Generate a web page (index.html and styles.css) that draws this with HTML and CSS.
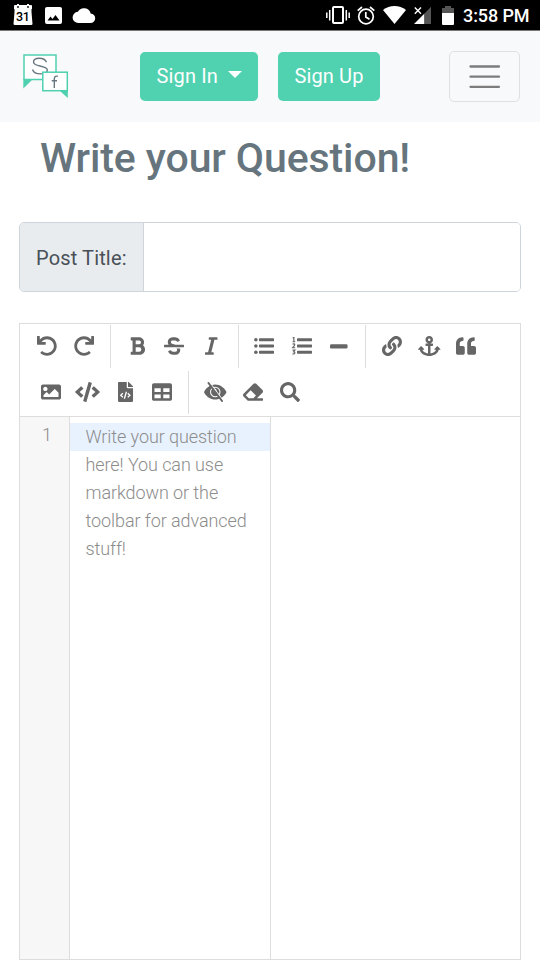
FILE: index.html
```html
<!DOCTYPE html>
<html lang="en">
<head>
<meta charset="utf-8">
<title>Write your Question!</title>
<link rel="stylesheet" href="styles.css">
</head>
<body>
<div class="status">
  <div class="notices">
    <svg width="20" height="22" viewBox="0 0 20 22"><path fill="#fff" d="M1 2Q1 1 2 1H4V0H6V1H14V0H16V1H18Q19 1 19 2V5H18.500V8L19.500 20Q19.500 21 18 21H2Q.5 21 .5 20L1.500 8V5H1Z"/><circle cx="5" cy="3" r=".9"/><circle cx="15" cy="3" r=".9"/><text x="9.700" y="17" text-anchor="middle" class="day">31</text></svg>
    <svg class="photo" width="17" height="17" viewBox="0 0 17 17"><rect width="17" height="17" rx="2" fill="#fff"/><path d="M2.500 13.500 5.500 9.500 7.500 12 10.500 8 14.500 13.500Z"/></svg>
    <svg class="cloud" width="22" height="15" viewBox="0 0 22 15"><path fill="#fff" d="M17.700 5.600A6.900 6.900 0 0 0 4.900 3.800 5.500 5.500 0 0 0 5.500 15H17.300A4.700 4.700 0 0 0 17.700 5.600Z"/></svg>
  </div>
  <div class="system">
    <svg width="24" height="18" viewBox="0 0 24 18"><g fill="none" stroke="#fff"><rect x="7" y="1" width="10" height="16" rx="1" stroke-width="2"/><path stroke-width="1.500" d="M.8 6.500V12M3.700 4V14.500M20.300 4V14.500M23.200 6.500V12"/></g></svg>
    <svg class="alarm" width="18" height="19" viewBox="0 0 18 19"><g fill="none" stroke="#fff" stroke-width="1.700"><circle cx="9" cy="10.500" r="7.300"/><path d="M.7 4.600 5 1M17.300 4.600 13 1M8.800 6V11L12.500 13.200"/></g></svg>
    <svg class="wifi" width="23" height="18" viewBox="0 0 23 18"><path fill="#fff" d="M0 4A19 19 0 0 1 23 4L11.500 18Z"/></svg>
    <svg class="cell" width="17" height="18" viewBox="0 0 17 18"><path fill="#fff" d="M0 18 10.500 7.500V18Z"/><path fill="#555" d="M10.500 7.500 17 .8V18H10.500Z"/><path stroke="#fff" stroke-width="1.400" d="M.8 1.500 7 7.700M7 1.500 .8 7.700"/></svg>
    <svg class="battery" width="12" height="19" viewBox="0 0 12 19"><path fill="#555" d="M0 2H3V0H9V2H12V7H0Z"/><path fill="#fff" d="M0 7H12V18Q12 19 11 19H1Q0 19 0 18Z"/></svg>
    <span class="clock">3:58 PM</span>
  </div>
</div>

<nav class="navbar">
  <svg class="logo" width="46" height="46" viewBox="0 0 46 46"><g fill="#fff" stroke="#4fd1b0" stroke-width="1.500"><path fill="#4fd1b0" stroke="none" d="M.3 25H10L.3 34.500Z"/><rect x="1" y="1" width="32" height="24.500"/></g><path fill="none" stroke="#697780" stroke-width="1.400" d="M23.500 8.200C22 4.500 18.500 4.200 16.300 4.200 12.500 4.200 10.500 6 10.500 8 10.500 10.500 13.500 11.300 17 12 22 13 24.300 14 24.300 16 24.300 18.500 21.500 19.900 17.500 19.900 13.500 19.900 10.500 18.700 9.500 15.500"/><g fill="#fff" stroke="#4fd1b0" stroke-width="1.500"><path fill="#4fd1b0" stroke="none" d="M37 37H44.800V44Z"/><rect x="19.800" y="18.200" width="24.500" height="18.500"/></g><path fill="none" stroke="#697780" stroke-width="1.400" d="M34.800 22.300C32 21.700 31.300 23 31.300 25.300V34M28.700 26.700H34"/></svg>
  <button class="btn signin">Sign In <i class="caret"></i></button>
  <button class="btn signup">Sign Up</button>
  <button class="toggler" aria-label="Menu"><svg width="32" height="26" viewBox="0 0 32 26"><path stroke="#7c7c7d" stroke-width="2.300" stroke-linecap="round" d="M1.500 2.500H30M1.500 12.700H30M1.500 22.800H30"/></svg></button>
</nav>

<main>
  <h1>Write your Question!</h1>
  <label class="post"><span class="post-label">Post Title:</span><input type="text"></label>

  <section class="editor">
    <div class="toolbar">
      <div class="row">
        <div class="group">
          <b><svg viewBox="0 0 512 512" width="20"><path id="undo" d="M212.333 224.333H12c-6.627 0-12-5.373-12-12V12C0 5.373 5.373 0 12 0h48c6.627 0 12 5.373 12 12v78.112C117.773 39.279 184.260 7.470 258.175 8.007c136.906.994 246.448 111.623 246.157 248.532C504.041 393.258 393.120 504 256.333 504c-64.089 0-122.496-24.313-166.510-64.215-5.099-4.622-5.334-12.554-.467-17.420l33.967-33.967c4.474-4.474 11.662-4.717 16.401-.525C170.760 415.336 211.580 432 256.333 432c97.268 0 176-78.716 176-176 0-97.267-78.716-176-176-176-58.496 0-110.280 28.476-142.274 72.333h98.274c6.627 0 12 5.373 12 12v48c0 6.627-5.373 12-12 12z"/></svg></b>
          <b><svg viewBox="0 0 512 512" width="20"><use href="#undo" transform="matrix(-1 0 0 1 512 0)"/></svg></b>
        </div>
        <div class="group">
          <b><svg viewBox="0 0 384 512" width="15"><path d="M333.490 238a122 122 0 0 0 27-65.210C367.870 96.490 308 32 233.420 32H34a16 16 0 0 0-16 16v48a16 16 0 0 0 16 16h31.870v288H34a16 16 0 0 0-16 16v48a16 16 0 0 0 16 16h209.320c70.800 0 134.140-51.750 141-122.400 4.740-48.450-16.390-92.060-50.830-119.600zM145.660 112h87.760a48 48 0 0 1 0 96h-87.760zm87.760 288h-87.760V288h87.760a56 56 0 0 1 0 112z"/></svg></b>
          <b><svg viewBox="0 0 512 512" width="20"><path d="M496 224H293.900l-87.170-26.830A43.550 43.550 0 0 1 219.550 112h66.790A49.890 49.890 0 0 1 331 139.580a16 16 0 0 0 21.460 7.150l42.940-21.470a16 16 0 0 0 7.160-21.460l-.53-1A128 128 0 0 0 287.510 32h-68a123.680 123.680 0 0 0-123 135.640c2 20.890 10.100 39.830 21.780 56.360H16a16 16 0 0 0-16 16v32a16 16 0 0 0 16 16h480a16 16 0 0 0 16-16v-32a16 16 0 0 0-16-16zm-180.240 96A43 43 0 0 1 336 356.450 43.590 43.590 0 0 1 292.450 400h-66.790A49.890 49.890 0 0 1 181 372.420a16 16 0 0 0-21.460-7.150l-42.940 21.470a16 16 0 0 0-7.160 21.460l.53 1A128 128 0 0 0 224.490 480h68a123.680 123.680 0 0 0 123-135.640 114.250 114.250 0 0 0-5.340-24.360z"/></svg></b>
          <b><svg viewBox="0 0 320 512" width="12.500"><path d="M320 48v32a16 16 0 0 1-16 16h-62.760l-80 320H208a16 16 0 0 1 16 16v32a16 16 0 0 1-16 16H16a16 16 0 0 1-16-16v-32a16 16 0 0 1 16-16h62.760l80-320H112a16 16 0 0 1-16-16V48a16 16 0 0 1 16-16h192a16 16 0 0 1 16 16z"/></svg></b>
        </div>
        <div class="group">
          <b><svg viewBox="0 0 512 512" width="20"><circle cx="48" cy="96" r="46"/><circle cx="48" cy="256" r="46"/><circle cx="48" cy="416" r="46"/><path id="bars" d="M144 60H496Q512 60 512 76V116Q512 132 496 132H144Q128 132 128 116V76Q128 60 144 60ZM144 220H496Q512 220 512 236V276Q512 292 496 292H144Q128 292 128 276V236Q128 220 144 220ZM144 380H496Q512 380 512 396V436Q512 452 496 452H144Q128 452 128 436V396Q128 380 144 380Z"/></svg></b>
          <b><svg viewBox="0 0 512 512" width="20"><use href="#bars"/><path class="line" d="M18 42H48V145M14 147H82M14 207Q70 190 70 222 65 250 18 300H82M14 362H74L44 405Q76 408 72 436 62 470 12 456"/></svg></b>
          <b><svg viewBox="0 0 448 512" width="17.500"><rect y="208" width="448" height="112" rx="32"/></svg></b>
        </div>
        <div class="group">
          <b><svg viewBox="0 0 512 512" width="20"><path d="M326.612 185.391c59.747 59.809 58.927 155.698.36 214.590-.11.120-.24.250-.36.370l-67.200 67.200c-59.270 59.270-155.699 59.262-214.960 0-59.270-59.260-59.270-155.700 0-214.960l37.106-37.106c9.840-9.840 26.786-3.300 27.294 10.606.648 17.722 3.826 35.527 9.690 52.721 1.986 5.822.567 12.262-3.783 16.612l-13.087 13.087c-28.026 28.026-28.905 73.660-1.155 101.960 28.024 28.579 74.086 28.749 102.325.510l67.200-67.190c28.191-28.191 28.073-73.757 0-101.830-3.701-3.694-7.429-6.564-10.341-8.569a16.037 16.037 0 0 1-6.947-12.606c-.396-10.567 3.348-21.456 11.698-29.806l21.054-21.055c5.521-5.521 14.182-6.199 20.584-1.731a152.482 152.482 0 0 1 20.522 17.197zM467.547 44.449c-59.261-59.262-155.690-59.270-214.960 0l-67.200 67.200c-.12.120-.25.250-.36.370-58.566 58.892-59.387 154.781.360 214.590a152.454 152.454 0 0 0 20.521 17.196c6.402 4.468 15.064 3.789 20.584-1.731l21.054-21.055c8.350-8.350 12.094-19.239 11.698-29.806a16.037 16.037 0 0 0-6.947-12.606c-2.912-2.005-6.640-4.875-10.341-8.569-28.073-28.073-28.191-73.639 0-101.830l67.200-67.190c28.239-28.239 74.300-28.069 102.325.510 27.750 28.300 26.872 73.934-1.155 101.960l-13.087 13.087c-4.350 4.350-5.769 10.790-3.783 16.612 5.864 17.194 9.042 34.999 9.690 52.721.509 13.906 17.454 20.446 27.294 10.606l37.106-37.106c59.271-59.259 59.271-155.699.001-214.959z"/></svg></b>
          <b><svg viewBox="0 0 576 512" width="22.500"><path d="M12.971 352h32.394C67.172 454.735 181.944 512 288 512c106.229 0 220.853-57.380 242.635-160h32.394c10.691 0 16.045-12.926 8.485-20.485l-67.029-67.029c-4.686-4.686-12.284-4.686-16.971 0l-67.029 67.029c-7.560 7.560-2.206 20.485 8.485 20.485h35.146c-20.290 54.317-84.963 86.588-144.117 94.015V256h52c6.627 0 12-5.373 12-12v-40c0-6.627-5.373-12-12-12h-52v-5.470c37.281-13.226 63.993-48.693 64-90.370C384.009 43.210 341.380.199 288.427.001 235.318-.195 192 42.815 192 96c0 41.798 26.716 77.409 64 90.530V192h-52c-6.627 0-12 5.373-12 12v40c0 6.627 5.373 12 12 12h52v190.015c-58.936-7.399-123.820-39.679-144.117-94.015h35.146c10.691 0 16.045-12.926 8.485-20.485l-67.029-67.029c-4.686-4.686-12.284-4.686-16.971 0L4.485 331.515C-3.074 339.074 2.280 352 12.971 352zM288 64c17.645 0 32 14.355 32 32s-14.355 32-32 32-32-14.355-32-32 14.355-32 32-32z"/></svg></b>
          <b><svg viewBox="0 0 512 512" width="20"><path d="M464 256h-80v-64c0-35.300 28.700-64 64-64h8c13.300 0 24-10.700 24-24V56c0-13.300-10.700-24-24-24h-8c-88.400 0-160 71.600-160 160v240c0 26.500 21.500 48 48 48h128c26.500 0 48-21.500 48-48V304c0-26.500-21.500-48-48-48zm-288 0H96v-64c0-35.300 28.700-64 64-64h8c13.300 0 24-10.700 24-24V56c0-13.300-10.700-24-24-24h-8C71.600 32 0 103.600 0 192v240c0 26.500 21.500 48 48 48h128c26.500 0 48-21.500 48-48V304c0-26.500-21.500-48-48-48z"/></svg></b>
        </div>
      </div>
      <div class="row second">
        <div class="group">
          <b><svg viewBox="0 0 512 512" width="20"><path d="M464 448H48c-26.510 0-48-21.490-48-48V112c0-26.510 21.490-48 48-48h416c26.510 0 48 21.490 48 48v288c0 26.510-21.490 48-48 48zM112 120c-30.928 0-56 25.072-56 56s25.072 56 56 56 56-25.072 56-56-25.072-56-56-56zM64 384h384V272l-87.515-87.515c-4.686-4.686-12.284-4.686-16.971 0L208 320l-55.515-55.515c-4.686-4.686-12.284-4.686-16.971 0L64 336v48z"/></svg></b>
          <b><svg viewBox="0 0 640 512" width="25"><path d="M278.900 511.500l-61-17.700c-6.400-1.800-10-8.500-8.200-14.900L346.200 8.700c1.800-6.400 8.500-10 14.900-8.200l61 17.700c6.400 1.800 10 8.500 8.200 14.900L293.800 503.300c-1.900 6.400-8.500 10.100-14.900 8.200zm-114-112.200l43.500-46.400c4.600-4.900 4.300-12.700-.8-17.200L117 256l90.600-79.700c5.100-4.500 5.500-12.300.8-17.200l-43.500-46.400c-4.500-4.800-12.100-5.100-17-.5L3.800 247.200c-5.100 4.700-5.100 12.800 0 17.500l144.100 135.100c4.900 4.600 12.500 4.400 17-.5zm327.200.6l144.100-135.100c5.100-4.700 5.100-12.800 0-17.500L492.100 112.100c-4.800-4.500-12.400-4.300-17 .5L431.600 159c-4.600 4.900-4.300 12.700.8 17.200L523 256l-90.600 79.700c-5.100 4.500-5.500 12.300-.8 17.200l43.500 46.400c4.500 4.900 12.100 5.100 17 .6z"/></svg></b>
          <b><svg viewBox="0 0 384 512" width="15"><path d="M384 121.941V128H256V0h6.059c6.365 0 12.470 2.529 16.971 7.029l97.941 97.941A24.005 24.005 0 0 1 384 121.941zM248 160c-13.200 0-24-10.800-24-24V0H24C10.745 0 0 10.745 0 24v464c0 13.255 10.745 24 24 24h336c13.255 0 24-10.745 24-24V160H248z"/><path class="cut" d="M124 288 70 338 124 388M250 288 304 338 250 388M216 248 162 430"/></svg></b>
          <b><svg viewBox="0 0 512 512" width="20"><path d="M464 32H48C21.490 32 0 53.490 0 80v352c0 26.510 21.490 48 48 48h416c26.510 0 48-21.490 48-48V80c0-26.510-21.490-48-48-48zM224 416H64v-96h160v96zm0-160H64v-96h160v96zm224 160H288v-96h160v96zm0-160H288v-96h160v96z"/></svg></b>
        </div>
        <div class="group">
          <b><svg viewBox="0 0 576 512" width="22.500"><path fill-rule="evenodd" d="M6 240C66 136 170 64 288 64S510 136 570 240Q576 256 570 272C510 376 406 448 288 448S66 376 6 272Q0 256 6 240ZM288 122A134 134 0 1 0 288 390 134 134 0 1 0 288 122Z"/><path fill-rule="evenodd" d="M288 148A108 108 0 1 1 288 364 108 108 0 1 1 288 148ZM280 172A40 40 0 1 0 280 252 40 40 0 1 0 280 172Z"/><path class="gap" d="M140 0 500 490"/><path class="slash" d="M112 22 464 490"/></svg></b>
          <b><svg viewBox="0 0 512 512" width="20"><path d="M497.941 273.941c18.745-18.745 18.745-49.137 0-67.882l-160-160c-18.745-18.745-49.136-18.746-67.883 0l-256 256c-18.745 18.745-18.745 49.137 0 67.882l96 96A48.004 48.004 0 0 0 144 480h356c6.627 0 12-5.373 12-12v-40c0-6.627-5.373-12-12-12H355.883l142.058-142.059zm-302.627-62.627l137.373 137.373L265.373 416H150.628l-80-80 124.686-124.686z"/></svg></b>
          <b><svg viewBox="0 0 512 512" width="20"><path d="M505 442.700L405.300 343c-4.500-4.500-10.600-7-17-7H372c27.600-35.300 44-79.700 44-128C416 93.100 322.900 0 208 0S0 93.100 0 208s93.100 208 208 208c48.300 0 92.700-16.400 128-44v16.300c0 6.400 2.500 12.500 7 17l99.700 99.700c9.400 9.400 24.600 9.400 33.900 0l28.300-28.300c9.400-9.400 9.400-24.600.1-34zM208 336c-70.700 0-128-57.200-128-128 0-70.700 57.200-128 128-128 70.700 0 128 57.200 128 128 0 70.700-57.200 128-128 128z"/></svg></b>
        </div>
      </div>
    </div>
    <div class="panes">
      <div class="gutter">1</div>
      <div class="code"><div class="first">Write your question</div><div>here! You can use</div><div>markdown or the</div><div>toolbar for advanced</div><div>stuff!</div></div>
      <div class="preview"></div>
    </div>
  </section>
</main>
</body>
</html>
```
FILE: styles.css
```css
* { box-sizing: border-box; }
html, body { margin: 0; height: 100%; }
body { height: 960px; overflow: hidden; background: #fff; font-family: Roboto, sans-serif; display: flex; flex-direction: column; }
svg { display: block; flex: none; overflow: visible; }

.status { height: 31px; flex: none; background: #000; border-bottom: 1px solid #777; display: flex; justify-content: space-between; padding: 0 10px 0 12.500px; }
.notices, .system { display: flex; align-items: center; }
.day { font: 500 12.500px Roboto, sans-serif; letter-spacing: -.5px; }
.photo { margin-left: 12.500px; }
.cloud { margin-left: 11px; }
.system { color: #fff; }
.alarm { margin-left: 7.500px; }
.wifi { margin-left: 8px; }
.cell { margin-left: 8px; }
.battery { margin-left: 11px; }
.clock { margin-left: 9px; width: 67px; font-size: 18px; font-weight: 500; letter-spacing: -.1px; line-height: 30px; padding-top: 2px; white-space: nowrap; }

.navbar { height: 91px; flex: none; background: #f8f9fb; display: flex; align-items: center; padding: 0 20px 0 23px; }
.btn { border: 0; border-radius: 5px; height: 49px; background: #50d1b0; color: #fff; font: 400 20px/49px Roboto, sans-serif; padding: 0; letter-spacing: .15px; white-space: nowrap; }
.signin { width: 118px; margin-left: 71px; display: flex; align-items: center; justify-content: center; gap: 9.500px; }
.caret { border: 7px solid transparent; border-top-color: #fff; border-bottom: 0; margin-top: -4px; }
.signup { width: 102px; margin-left: 20px; }
.toggler { margin-left: auto; width: 71px; height: 51px; border: 1px solid #dfe0e2; border-radius: 5px; background: none; padding: 0; display: flex; align-items: center; justify-content: center; }

main { flex: 1; display: flex; flex-direction: column; padding: 0 19px; }
h1 { margin: 11px 0 0 21px; font-size: 41px; font-weight: 500; letter-spacing: -.1px; line-height: 50px; color: #66757d; white-space: nowrap; }
.post { margin-top: 39px; height: 70px; flex: none; display: flex; border: 1px solid #ced4da; border-radius: 5px; overflow: hidden; }
.post-label { width: 124px; background: #e8ecef; border-right: 1px solid #ced4da; color: #495057; font-size: 20px; line-height: 70px; letter-spacing: .15px; padding-left: 16px; white-space: nowrap; }
.post input { flex: 1; min-width: 0; border: 0; background: #fff; font: 20px Roboto, sans-serif; }

.editor { flex: 1; margin-top: 31px; border: 1px solid #ddd; display: flex; flex-direction: column; }
.toolbar { height: 93px; flex: none; border-bottom: 1px solid #ddd; padding-top: 1px; }
.row { display: flex; height: 46px; padding-left: 8.400px; }
.second { padding-left: 12.200px; }
.group { display: flex; height: 43px; }
.group + .group { margin-left: 7.400px; border-left: 1px solid #ddd; padding-left: 7.400px; }
.group b { width: 37.200px; height: 42px; display: flex; align-items: center; justify-content: center; }
.group svg { height: 20px; fill: #666; }
.group .line { fill: none; stroke: #666; stroke-width: 30; }
.group .cut { fill: none; stroke: #fff; stroke-width: 34; }
.group .gap { stroke: #fff; stroke-width: 26; }
.group .slash { stroke: #666; stroke-width: 46; stroke-linecap: round; }

.panes { flex: 1; display: flex; font-size: 18px; font-weight: 300; line-height: 28px; color: #8c8c8c; }
.gutter { width: 50px; border-right: 1px solid #ddd; background: #f7f7f7; text-align: right; padding: 4px 17px 0 0; }
.code { width: 201px; border-right: 1px solid #ddd; padding-top: 6px; white-space: nowrap; }
.code div { padding-left: 15.500px; letter-spacing: -.08px; }
.code .first { background: #e8f2ff; }
.preview { flex: 1; }
```
